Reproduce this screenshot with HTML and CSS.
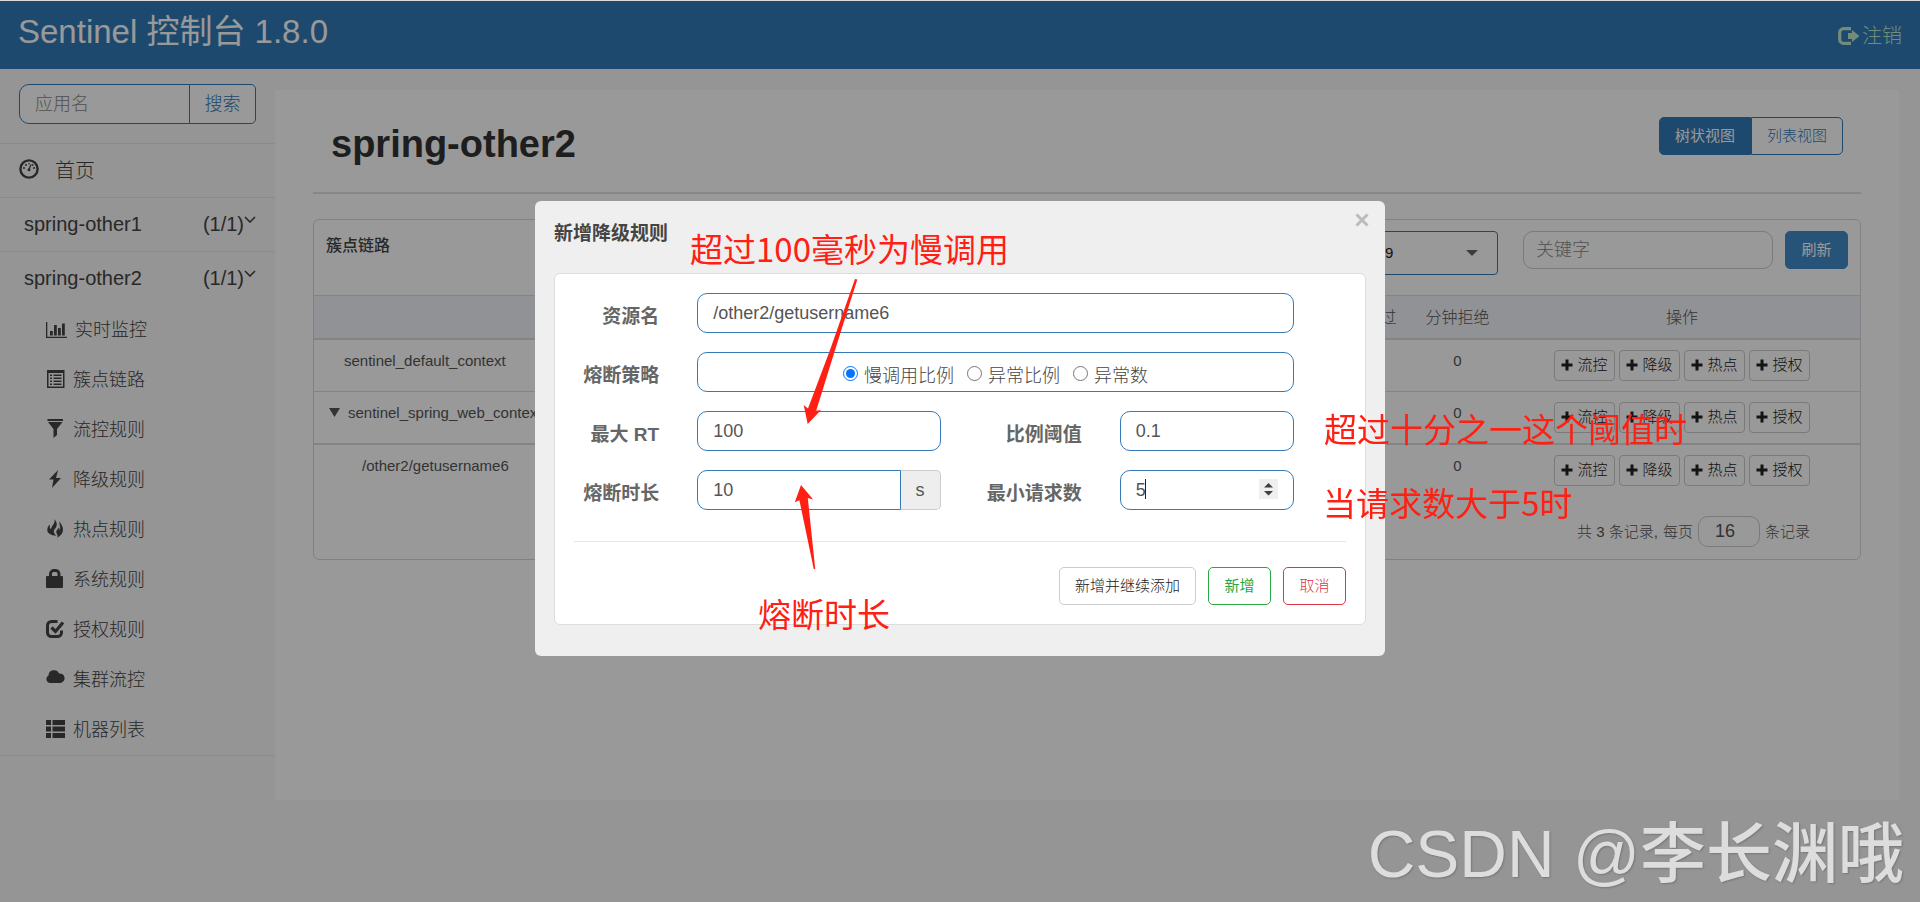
FILE: index.html
```
<!DOCTYPE html>
<html lang="zh-CN">
<head>
<meta charset="utf-8">
<title>Sentinel 控制台 1.8.0</title>
<link rel="stylesheet" href="styles.css">
</head>
<body>
<svg class="defs" aria-hidden="true">
  <symbol id="i-plus" viewBox="0 0 12 12"><path d="M4.500 0.500h3v4h4v3h-4v4h-3v-4h-4v-3h4z"/></symbol>
  <symbol id="i-chev" viewBox="0 0 12 7"><path d="M1 1l5 5 5-5" fill="none" stroke="currentColor" stroke-width="1.600"/></symbol>
</svg>

<header class="topbar">
  <span class="brand">Sentinel 控制台 1.8.0</span>
  <a class="logout" href="#">
    <svg width="22" height="18" viewBox="0 0 22 18"><path d="M13 1.700H5.500A3.800 3.800 0 0 0 1.700 5.500v7a3.800 3.800 0 0 0 3.800 3.800H13" fill="none" stroke="currentColor" stroke-width="3.200"/><path d="M10 6h4V3l7.500 6L14 15v-3h-4z" fill="currentColor"/></svg>
    <span>注销</span>
  </a>
</header>

<div class="layout">
  <aside class="sidebar">
    <form class="search">
      <input type="text" placeholder="应用名" aria-label="应用名">
      <button type="button">搜索</button>
    </form>
    <nav>
      <a class="home" href="#">
        <svg width="20" height="20" viewBox="0 0 20 20"><circle cx="10" cy="10" r="8.600" fill="none" stroke="currentColor" stroke-width="2.400"/><circle cx="10" cy="10.800" r="1.500"/><path d="M10 10.500L12 5.500" stroke="currentColor" stroke-width="1.200"/><circle cx="5" cy="9" r="1"/><circle cx="7" cy="6" r="1"/><circle cx="10" cy="4.800" r=".8"/><circle cx="15" cy="9" r="1"/><circle cx="13.500" cy="6" r=".9"/></svg>
        <span>首页</span>
      </a>
      <a class="app" href="#"><span>spring-other1</span><span class="count">(1/1)<svg width="12" height="7"><use href="#i-chev"/></svg></span></a>
      <a class="app" href="#"><span>spring-other2</span><span class="count">(1/1)<svg width="12" height="7"><use href="#i-chev"/></svg></span></a>
      <ul class="menu">
        <li><a href="#"><svg class="wide" width="21" height="16" viewBox="0 0 21 16"><path d="M0 0h1.300v14.700H21V16H0zM4 9h2.800v4.500H4zM8 3h2.800v10.500H8zM12 6h2.800v7.500H12zM16 1.500h2.800v12H16z"/></svg>实时监控</a></li>
        <li><a href="#"><svg width="19" height="18" viewBox="0 0 19 18"><path fill-rule="evenodd" d="M1 0h17.500v18H1zM2.500 3v13.500H17V3z"/><path d="M4 4.500h2V6H4zM7.500 4.500h8V6h-8zM4 7.500h2V9H4zM7.500 7.500h8V9h-8zM4 10.500h2V12H4zM7.500 10.500h8V12h-8zM4 13.500h2V15H4zM7.500 13.500h8V15h-8z"/></svg>簇点链路</a></li>
        <li><a href="#"><svg width="19" height="19" viewBox="0 0 19 19"><path d="M1.500 0h15.500v2H1.500zM2 3h14.500L11 10v6l-3.500 3v-9z"/></svg>流控规则</a></li>
        <li><a href="#"><svg width="19" height="18" viewBox="0 0 19 18"><path d="M12 0L3 9.500h4.500L6 18l9-10h-5z"/></svg>降级规则</a></li>
        <li><a href="#"><svg width="19" height="19" viewBox="0 0 19 19"><path d="M8.500 0c2 2.500 3 5 1.800 7.800C9.500 10 7 11 8 13.500c.5 1.600 1.500 2.500 2.500 3.300C4.500 16.500 1 14 1.300 10.500 1.500 8 2.500 6.500 4 5.500c-.6 2-.3 3.500 1 4.800C5.500 6.500 9.500 4.500 8.500 0zM14 2c-.5 2.500 3 4 3 8.500 0 3.500-2 6-6 8.500 1.500-2.500 0-3.500-.7-5.500-.6-2 1.500-3 2.700-5 .7 1 .6 2 .4 3C16 9 12 5 14 2z"/></svg>热点规则</a></li>
        <li><a href="#"><svg width="19" height="19" viewBox="0 0 19 19"><path fill-rule="evenodd" d="M3 7V5a5 5 0 0 1 5-5h1.500a5 5 0 0 1 5 5v2H16q1 0 1 1v10q0 1-1 1H1q-1 0-1-1V8q0-1 1-1zm3 0h5.500V4.500Q11.500 3 10 3H7.500Q6 3 6 4.500z"/></svg>系统规则</a></li>
        <li><a href="#"><svg width="19" height="18" viewBox="0 0 19 18"><path d="M11.500 1.500h-6a4 4 0 0 0-4 4v7a4 4 0 0 0 4 4h6a4 4 0 0 0 4-4v-2" fill="none" stroke="currentColor" stroke-width="3"/><path d="M5.500 7.500l4 4L17 2.500" fill="none" stroke="currentColor" stroke-width="3.200"/></svg>授权规则</a></li>
        <li><a href="#"><svg class="cloud" width="19" height="13" viewBox="0 0 19 13"><path d="M4 13a4 4 0 0 1-1.500-7.500A5.500 5.500 0 0 1 13 3.500 4.700 4.700 0 0 1 14.500 13z"/></svg>集群流控</a></li>
        <li><a href="#"><svg width="19" height="18" viewBox="0 0 19 18"><path d="M0 0h5v5H0zM6.500 0H19v5H6.500zM0 6.500h5v5H0zM6.500 6.500H19v5H6.500zM0 13h5v5H0zM6.500 13H19v5H6.500z"/></svg>机器列表</a></li>
      </ul>
    </nav>
  </aside>

  <main class="panel">
    <div class="panel-head">
      <h1>spring-other2</h1>
      <div class="toggle"><button type="button" class="on">树状视图</button><button type="button">列表视图</button></div>
    </div>
    <section class="card">
      <div class="card-head">
        <h2>簇点链路</h2>
        <div class="machine">
          <select aria-label="机器"><option>8719</option></select>
          <svg width="12" height="6" viewBox="0 0 12 6"><path d="M0 0h12L6 6z"/></svg>
        </div>
        <input class="keyword" type="text" placeholder="关键字" aria-label="关键字">
        <button type="button" class="refresh">刷新</button>
      </div>
      <table>
        <thead>
          <tr><th class="c-name"></th><th class="c-num">分钟通过</th><th class="c-num">分钟拒绝</th><th class="c-op">操作</th></tr>
        </thead>
        <tbody>
          <tr>
            <td class="lv1">sentinel_default_context</td><td>0</td><td>0</td>
            <td><div class="ops"><button type="button"><svg><use href="#i-plus"/></svg>流控</button><button type="button"><svg><use href="#i-plus"/></svg>降级</button><button type="button"><svg><use href="#i-plus"/></svg>热点</button><button type="button"><svg><use href="#i-plus"/></svg>授权</button></div></td>
          </tr>
          <tr class="parent">
            <td class="tree"><svg width="11" height="9" viewBox="0 0 11 9"><path d="M0 0h11L5.500 9z"/></svg>sentinel_spring_web_context</td><td>0</td><td>0</td>
            <td><div class="ops"><button type="button"><svg><use href="#i-plus"/></svg>流控</button><button type="button"><svg><use href="#i-plus"/></svg>降级</button><button type="button"><svg><use href="#i-plus"/></svg>热点</button><button type="button"><svg><use href="#i-plus"/></svg>授权</button></div></td>
          </tr>
          <tr class="last">
            <td class="lv2">/other2/getusername6</td><td>0</td><td>0</td>
            <td><div class="ops"><button type="button"><svg><use href="#i-plus"/></svg>流控</button><button type="button"><svg><use href="#i-plus"/></svg>降级</button><button type="button"><svg><use href="#i-plus"/></svg>热点</button><button type="button"><svg><use href="#i-plus"/></svg>授权</button></div></td>
          </tr>
        </tbody>
      </table>
      <div class="pager">
        <span>共 3 条记录,</span>
        <label for="size">每页</label>
        <input id="size" type="text" value="16">
        <span>条记录</span>
      </div>
    </section>
  </main>
</div>

<div class="backdrop">
  <div class="modal" role="dialog" aria-labelledby="dlg-title">
    <div class="modal-head">
      <h3 id="dlg-title">新增降级规则</h3>
      <button type="button" class="close" aria-label="关闭"><svg width="14" height="14" viewBox="0 0 14 14"><path d="M1.500 1.500l11 11M12.500 1.500l-11 11" stroke="currentColor" stroke-width="3"/></svg></button>
    </div>
    <form class="box">
      <div class="fields">
        <label for="res">资源名</label>
        <input id="res" class="field span" type="text" value="/other2/getusername6">
        <span class="lab" id="strategy">熔断策略</span>
        <div class="field span radios" role="radiogroup" aria-labelledby="strategy">
          <label><input type="radio" name="s" checked>慢调用比例</label>
          <label><input type="radio" name="s">异常比例</label>
          <label><input type="radio" name="s">异常数</label>
        </div>
        <label for="rt">最大 RT</label>
        <input id="rt" class="field" type="text" value="100">
        <label for="ratio">比例阈值</label>
        <input id="ratio" class="field" type="text" value="0.1">
        <label for="win">熔断时长</label>
        <div class="group"><input id="win" class="field" type="text" value="10"><span class="addon">s</span></div>
        <label for="min">最小请求数</label>
        <div class="number">
          <input id="min" class="field" type="text" inputmode="numeric" value="5">
          <i class="caret"></i>
          <svg class="spin" width="19" height="20" viewBox="0 0 19 20"><path fill="#efefef" d="M0 0h19v20H0z"/><path fill="#404040" d="M5 8.500h9L9.500 4zM5 12h9l-4.500 4.500z"/></svg>
        </div>
      </div>
      <div class="actions">
        <button type="button">新增并继续添加</button>
        <button type="button" class="ok">新增</button>
        <button type="button" class="cancel">取消</button>
      </div>
    </form>
    <p class="note n1">超过100毫秒为慢调用</p>
    <p class="note n2">熔断时长</p>
    <p class="note n3">超过十分之一这个阈值时</p>
    <p class="note n4">当请求数大于5时</p>
    <svg class="arrow a1" width="56" height="147" viewBox="802 278 56 147"><path d="M855 279L857.300 279.500 836 347 816.200 410.700 821 410 807.700 424 803.700 405 808 408.500 830 350z"/></svg>
    <svg class="arrow a2" width="22" height="86" viewBox="794 484 22 86"><path d="M801 485L813.200 499.500 807.800 498 815.200 568.700 813.800 569.200 799.400 500.300 794.800 502.300z"/></svg>
  </div>
</div>
<div class="watermark">CSDN @李长渊哦</div>
</body>
</html>
```
FILE: styles.css
```
* { box-sizing: border-box; }

body {
  margin: 0;
  min-height: 100vh;
  border-top: 1px solid #ddd;
  background: #f8f8f8;
  color: #555;
  font: 300 15px/20px "Liberation Sans", "Noto Sans CJK SC", sans-serif;
}

input, button, select { font: inherit; color: inherit; margin: 0; }
button { cursor: pointer; }
a { color: inherit; text-decoration: none; }
svg { display: block; fill: currentColor; flex: none; }
.defs { position: absolute; width: 0; height: 0; }

/* top bar */
.topbar {
  display: flex;
  justify-content: space-between;
  height: 68px;
  padding: 0 18px;
  background: #337ab7;
  color: #fff;
}
.brand { font-size: 33px; font-weight: 400; line-height: 62px; }
.logout {
  display: flex;
  align-items: center;
  gap: 2px;
  padding-top: 2px;
  color: #bfe8cc;
  font-size: 20px;
}

.layout { display: flex; align-items: flex-start; }

/* sidebar */
.sidebar { width: 275px; flex: none; color: #444; border-bottom: 1px solid #e7e7e7; }
.search { display: flex; padding: 15px 19px 19px; font-size: 18px; }
.search input {
  flex: 1;
  min-width: 0;
  height: 40px;
  padding: 0 15px;
  border: 1px solid #337ab7;
  border-radius: 10px 0 0 10px;
  background: #fff;
}
.search button {
  width: 67px;
  margin-left: -1px;
  padding: 0;
  border: 1px solid #337ab7;
  border-radius: 0 5px 5px 0;
  background: #fff;
  color: #337ab7;
}
::placeholder { color: #888; opacity: 1; }
.home, .app {
  display: flex;
  align-items: center;
  height: 54px;
  border-top: 1px solid #e7e7e7;
  font-size: 20px;
}
.home { gap: 16px; padding: 0 19px; }
.home svg { margin-bottom: 4px; }
.app { justify-content: space-between; padding: 0 19px 2px 24px; }
.count { display: flex; align-items: center; }
.count svg { margin-bottom: 8px; }
.menu { list-style: none; margin: 0; padding: 0; font-size: 18px; }
.menu a { display: flex; align-items: center; gap: 8px; height: 50px; padding-left: 46px; }
.menu svg { margin-bottom: 3px; }
.menu .cloud { margin-bottom: 8px; }
.menu .wide { margin-bottom: 0; }

/* main panel */
.panel {
  flex: 1;
  min-width: 0;
  min-height: 710px;
  margin: 21px 21px 0 0;
  padding: 27px 38px;
  background: #fff;
}
.panel-head {
  display: flex;
  justify-content: space-between;
  align-items: flex-start;
  padding: 0 18px 21px;
  border-bottom: 2px solid #e2e2e2;
  margin-bottom: 25px;
}
h1 { margin: 0; font-size: 38px; line-height: 54px; color: #333; }
.toggle { display: flex; }
.toggle button {
  width: 92px;
  height: 38px;
  padding: 0;
  border: 1px solid #337ab7;
  border-radius: 0 5px 5px 0;
  background: #fff;
  color: #337ab7;
}
.toggle .on { border-radius: 5px 0 0 5px; background: #337ab7; color: #fff; font-weight: 400; }

.card { border: 1px solid #d8d8d8; border-radius: 6px; }
.card-head { display: flex; align-items: flex-start; height: 75px; padding: 11px 12px; }
h2 { flex: 1; margin: 5px 0 0; font-size: 16px; line-height: 20px; font-weight: 500; color: #444; }
.machine { position: relative; margin-right: 25px; }
.machine select {
  width: 251px;
  height: 44px;
  padding: 0 0 0 112px;
  appearance: none;
  border: 1px solid #337ab7;
  border-radius: 4px;
  background: #fff;
  color: #222;
}
.machine svg { position: absolute; right: 20px; top: 19px; color: #666; }
.keyword {
  width: 250px;
  height: 38px;
  margin-right: 12px;
  padding: 0 12px;
  border: 1px solid #ccc;
  border-radius: 10px;
  background: #fff;
  font-size: 18px;
}
.refresh {
  width: 63px;
  height: 38px;
  padding: 0;
  border: 1px solid #428bca;
  border-radius: 5px;
  background: #428bca;
  color: #fff;
  font-weight: 400;
}

table { width: 100%; table-layout: fixed; border-collapse: separate; border-spacing: 0; }
th {
  height: 45px;
  padding: 2px 0 0;
  border-top: 1px solid #ddd;
  border-bottom: 2px solid #ddd;
  background: #f1f4f8;
  font-size: 16px;
  font-weight: 300;
}
.c-num { width: 93px; }
.c-op { width: 356px; }
td { padding: 11px 0 0; height: 52px; border-bottom: 1px solid #ddd; text-align: center; vertical-align: top; }
td:last-child { padding: 10px 0; }
td:first-child { text-align: left; }
.parent td { border-bottom: 2px solid #ddd; }
.last td { border: 0; }
.lv1 { padding-left: 30px; }
.tree { display: flex; align-items: center; gap: 8px; height: 53px; padding: 0 0 10px 15px; }
.lv2 { padding-left: 48px; }
.ops { display: flex; justify-content: center; gap: 4px; }
.ops button {
  display: flex;
  align-items: center;
  justify-content: center;
  gap: 4px;
  width: 61px;
  height: 31px;
  padding: 0 0 2px;
  border: 1px solid #ccc;
  border-radius: 4px;
  background: #fff;
  color: #222;
}
.ops svg { width: 12px; height: 12px; }
.pager {
  display: flex;
  align-items: center;
  justify-content: flex-end;
  gap: 5px;
  padding: 19px 50px 12px 0;
}
.pager input {
  width: 62px;
  height: 31px;
  padding: 0 16px;
  border: 1px solid #ccc;
  border-radius: 10px;
  background: #fff;
  font-size: 18px;
}

/* dialog */
.backdrop {
  position: fixed;
  inset: 1px 0 0;
  display: flex;
  justify-content: center;
  align-items: flex-start;
  padding-top: 200px;
  background: rgba(0, 0, 0, .4);
}
.modal { position: relative; width: 850px; padding: 0 19px 31px; border-radius: 6px; background: #efefef; }
.modal-head { display: flex; justify-content: space-between; height: 72px; }
h3 { margin: 0; font-size: 19px; line-height: 66px; color: #444; }
.close { align-self: flex-start; margin: 12px -3px 0 0; padding: 0; border: 0; background: none; color: #bbb; }
.box { padding: 19px; border: 1px solid #ddd; border-radius: 6px; background: #fff; }
.fields {
  display: grid;
  grid-template-columns: 86fr 243fr 105fr 174fr;
  gap: 19px 37px;
  padding: 0 52px 31px 0;
  border-bottom: 1px solid #e5e5e5;
  font-size: 18px;
}
.fields > label, .lab {
  height: 40px;
  padding: 4px 1px 0 0;
  text-align: right;
  white-space: nowrap;
  font-size: 19px;
  font-weight: 700;
  line-height: 40px;
  color: #666;
}
.field {
  width: 100%;
  height: 40px;
  padding: 0 15px;
  border: 1px solid #337ab7;
  border-radius: 10px;
  background: #fff;
}
.span { grid-column: span 3; }
.radios { display: flex; justify-content: center; align-items: center; gap: 13px; padding-top: 8px; }
.radios label { display: flex; align-items: center; gap: 6px; color: #444; }
.radios input { width: 15px; height: 15px; margin-bottom: 6px; }
.group { display: flex; }
.group .field { flex: 1; min-width: 0; border-radius: 10px 0 0 10px; }
.addon {
  width: 40px;
  border: 1px solid #ccc;
  border-left: 0;
  border-radius: 0 5px 5px 0;
  background: #eee;
  line-height: 38px;
  text-align: center;
}
.number { position: relative; }
.caret { position: absolute; left: 25px; top: 9px; width: 1px; height: 20px; background: #222; }
.spin { position: absolute; right: 16px; top: 9px; }
.actions { display: flex; justify-content: flex-end; gap: 12px; padding-top: 25px; }
.actions button {
  min-width: 63px;
  height: 38px;
  padding: 0 15px;
  border: 1px solid #ccc;
  border-radius: 5px;
  background: #fff;
  color: #222;
}
.actions .ok { border-color: #28a745; color: #28a745; font-weight: 400; }
.actions .cancel { border-color: #dc3545; color: #dc3545; }

/* callouts drawn over the dialog */
.note { position: absolute; margin: 0; color: #ff2013; font: 400 33px/40px "Noto Sans CJK SC", sans-serif; white-space: nowrap; }
.n1 { left: 155px; top: 27px; }
.n2 { left: 223px; top: 392px; }
.n3 { left: 789px; top: 207px; }
.n4 { left: 788px; top: 281px; }
.arrow { position: absolute; color: #ff2013; }
.a1 { left: 267px; top: 77px; }
.a2 { left: 259px; top: 283px; }

.watermark {
  position: fixed;
  right: 16px;
  bottom: 8px;
  color: #ddd;
  font-size: 66px;
  font-weight: 500;
  line-height: 80px;
  text-shadow: 1px 1px 2px #777;
}
```
